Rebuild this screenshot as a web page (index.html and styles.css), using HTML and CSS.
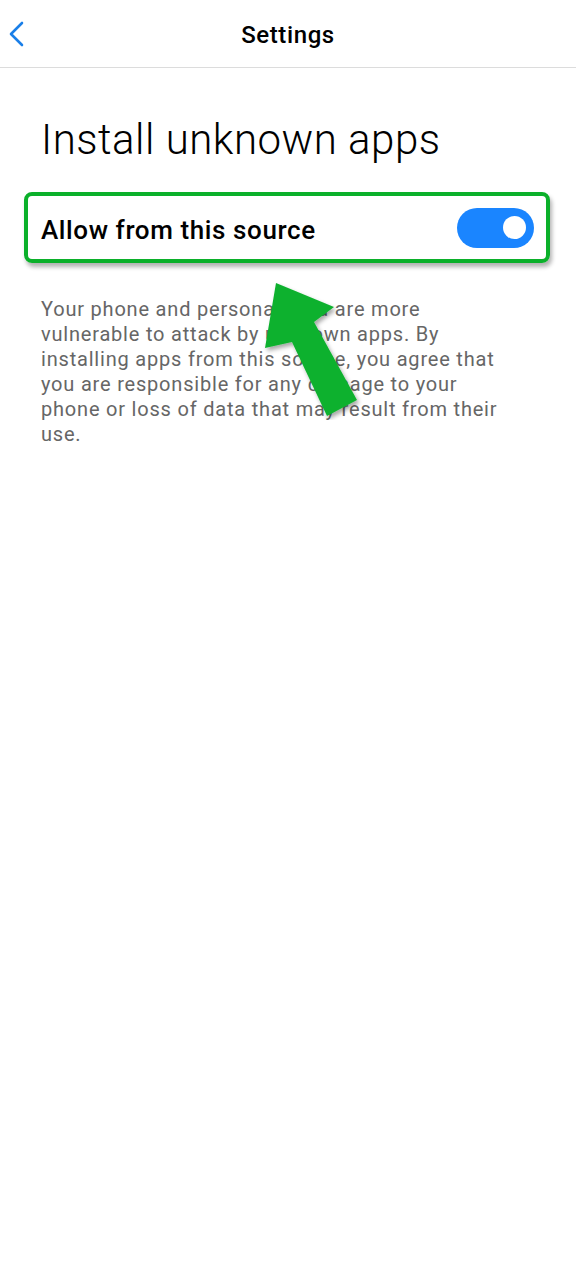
FILE: index.html
```html
<!DOCTYPE html>
<html>
<head>
  <meta name="viewport" content="width=device-width, initial-scale=1">
  <title>Settings</title>
  <link rel="stylesheet" href="styles.css">
</head>
<body>
  <div class="topbar">
    <svg class="back" width="20" height="28" viewBox="0 0 20 28">
      <path d="M15 3 L4 14 L15 25" fill="none" stroke="#1a7fe8" stroke-width="2.6" stroke-linecap="round" stroke-linejoin="round"/>
    </svg>
    <span class="bar-title">Settings</span>
  </div>

  <div class="content">
    <h1>Install unknown apps</h1>

    <div class="highlight">
      <span class="row-label">Allow from this source</span>
      <label class="switch">
        <input type="checkbox" checked>
        <span class="toggle"></span>
      </label>
    </div>

    <p class="note">Your phone and personal data are more vulnerable to attack by unknown apps. By installing apps from this source, you agree that you are responsible for any damage to your phone or loss of data that may result from their use.</p>
  </div>

  <svg class="arrow" width="120" height="150" viewBox="250 270 120 150">
    <defs>
      <filter id="sh" x="-20%" y="-20%" width="150%" height="150%">
        <feDropShadow dx="2" dy="3" stdDeviation="2" flood-color="#000" flood-opacity="0.35"/>
      </filter>
    </defs>
    <polygon points="276,283 334,307 314,322 357,400 327,416 292,342 265,348" fill="#0db12e" filter="url(#sh)"/>
  </svg>
</body>
</html>
```

FILE: styles.css
```css
html, body {margin: 0; padding: 0; background: #fff;}
body {font-family: Roboto, "Noto Sans", sans-serif; color: #000; position: relative; min-height: 1280px;}

.topbar {height: 67px; border-bottom: 1px solid #dcdcdc; display: flex; align-items: center; justify-content: center; position: relative;}
.back {position: absolute; left: 7px; top: 20px;}
.bar-title {font-size: 24px; font-weight: 500; letter-spacing: 0.6px; margin-top: 2px;}

.content {padding: 0 26px 0 24px;}
h1 {font-size: 42px; font-weight: 300; margin: 48px 0 0 17px; line-height: 48px; letter-spacing: 0.5px;}

.highlight {margin-top: 28px; height: 63px; border: 4px solid #0bb02a; border-radius: 8px;
  box-shadow: 2px 4px 4px rgba(0,0,0,0.3); display: flex; align-items: center; justify-content: space-between;
  padding: 0 12px 0 13px;}
.row-label {font-size: 26px; font-weight: 500; letter-spacing: 0.6px; margin-top: 4px;}

.switch {position: relative; display: inline-block; width: 77px; height: 40px;}
.switch input {display: none;}
.toggle {position: absolute; top: 0; left: 0; right: 0; bottom: 0; background: #ccc; border-radius: 20px;}
.toggle:before {position: absolute; content: ""; width: 23px; height: 23px; left: 8px; top: 8.5px; background: #fff; border-radius: 50%;}
input:checked + .toggle {background: #1a85ff;}
input:checked + .toggle:before {transform: translateX(38px);}

.note {margin: 34px 0 0 17px; width: 464px; font-size: 20px; line-height: 25px; letter-spacing: 0.8px; color: #666;}

.arrow {position: absolute; left: 250px; top: 270px;}
```
